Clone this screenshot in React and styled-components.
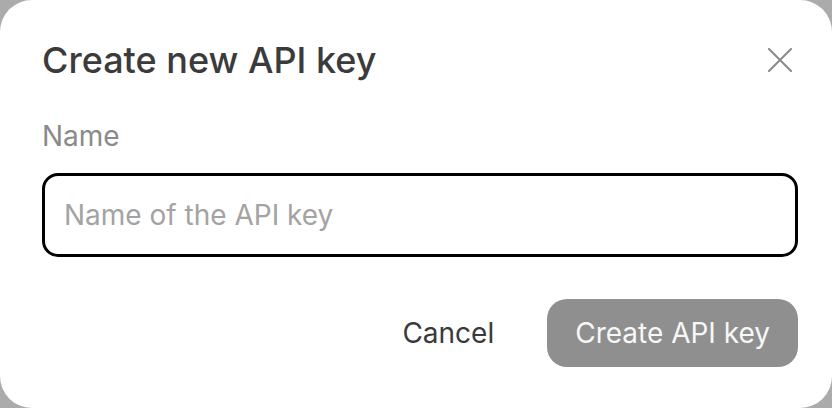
import React from "react";
import styled, { createGlobalStyle } from "styled-components";

const GlobalStyle = createGlobalStyle`
  html, body {
    margin: 0;
    padding: 0;
    background: #ababab;
  }
  body {
    font-family: Inter, "Noto Sans", sans-serif;
  }
`;

const Dialog = styled.div`
  box-sizing: border-box;
  width: 832px;
  height: 408px;
  background: #ffffff;
  border-radius: 32px;
  padding: 40px 34px 0 42px;
  display: flex;
  flex-direction: column;
`;

const Header = styled.div`
  display: flex;
  align-items: center;
  justify-content: space-between;
  height: 40px;
`;

const Title = styled.h2`
  margin: 0;
  font-size: 36px;
  line-height: 44px;
  font-weight: 500;
  color: #3b3b3b;
`;

const CloseButton = styled.button`
  width: 36px;
  height: 36px;
  padding: 0;
  border: none;
  background: none;
  display: flex;
  align-items: center;
  justify-content: center;
  color: #8a8a8a;
  cursor: pointer;
`;

const Label = styled.label`
  margin-top: 40px;
  font-size: 28px;
  line-height: 32px;
  font-weight: 400;
  color: #8a8a8a;
`;

const Input = styled.input`
  box-sizing: border-box;
  margin-top: 21px;
  width: 100%;
  height: 84px;
  border: 3px solid #000;
  border-radius: 16px;
  padding: 0 19px;
  font-family: inherit;
  font-size: 28px;
  color: #222;
  caret-color: #000;
  outline: none;
  &::placeholder {
    color: #a3a3a3;
  }
`;

const Footer = styled.div`
  margin-top: 42px;
  display: flex;
  justify-content: flex-end;
  align-items: center;
  gap: 53px;
`;

const Button = styled.button`
  height: 68px;
  padding: 0 ${(p) => (p.$primary ? "28px" : "0")};
  border: none;
  border-radius: 20px;
  font-family: inherit;
  font-size: 28px;
  font-weight: 400;
  background: ${(p) => (p.$primary ? "#8f8f8f" : "transparent")};
  color: ${(p) => (p.$primary ? "#f7f7f7" : "#3a3a3a")};
  cursor: pointer;
`;

export default function App() {
  return (
    <>
      <GlobalStyle />
      <Dialog>
        <Header>
          <Title>Create new API key</Title>
          <CloseButton aria-label="Close">
            <svg width="24" height="24" viewBox="0 0 24 24" fill="none">
              <path d="M1 1L23 23M23 1L1 23" stroke="currentColor" strokeWidth="2" strokeLinecap="round" />
            </svg>
          </CloseButton>
        </Header>
        <Label htmlFor="key-name">Name</Label>
        <Input id="key-name" placeholder="Name of the API key" autoFocus />
        <Footer>
          <Button>Cancel</Button>
          <Button $primary>Create API key</Button>
        </Footer>
      </Dialog>
    </>
  );
}
